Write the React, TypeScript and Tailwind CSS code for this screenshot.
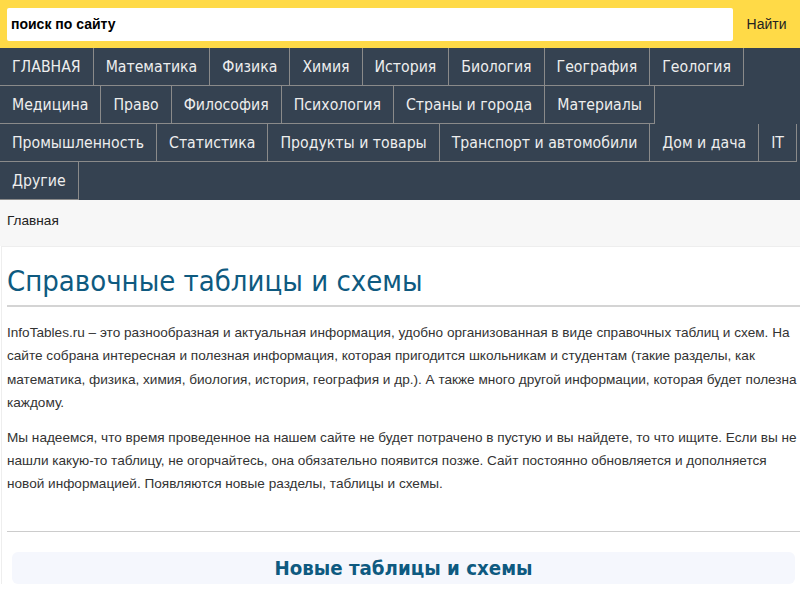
import React from 'react';

const rows = [
  'ГЛАВНАЯ', 'Математика', 'Физика', 'Химия', 'История', 'Биология', 'География', 'Геология',
  'Медицина', 'Право', 'Философия', 'Психология', 'Страны и города', 'Материалы',
  'Промышленность', 'Статистика', 'Продукты и товары', 'Транспорт и автомобили', 'Дом и дача', 'IT',
  'Другие',
];

export default function App() {
  return (
    <div className="w-[800px] min-h-[600px] bg-white font-['Liberation_Sans',Arial,sans-serif] text-[#333]">
      {/* search */}
      <div className="h-12 bg-[#ffda47] flex items-center pl-[7px]">
        <div className="w-[726px] h-[33px] bg-white rounded-[2px] flex items-center pl-1 text-[14px] font-bold text-black">
          поиск по сайту
        </div>
        <div className="flex-1 text-center text-[14px] text-[#222]">Найти</div>
      </div>

      {/* categories */}
      <nav className="bg-[#354251] flex flex-wrap font-['DejaVu_Sans_Condensed','DejaVu_Sans',sans-serif] text-[15.7px] text-[#eee]">
        {rows.map((r) => (
          <a key={r} className="h-[38px] px-3 pt-px flex items-center border-r border-b border-[#8a8a8a]">
            {r}
          </a>
        ))}
      </nav>

      {/* breadcrumb */}
      <div className="h-[46px] bg-[#f7f7f7] pt-[11px] pl-[7px] text-[13.6px] text-[#222]">Главная</div>

      <div className="ml-[1px] border-l border-t border-[#eee] pl-[5px] pt-[17px]">
        <h1 className="font-['DejaVu_Sans_Condensed','DejaVu_Sans',sans-serif] text-[29px] leading-[34px] text-[#0e5a80] border-b-2 border-[#d4d4d4] pb-[7px]">
          Справочные таблицы и схемы
        </h1>
        <div className="text-[13.6px] leading-[23.4px] pt-[14px]">
          <p className="mb-[11px]">
            InfoTables.ru – это разнообразная и актуальная информация, удобно организованная в виде справочных таблиц и схем. На сайте собрана интересная и полезная информация, которая пригодится школьникам и студентам (такие разделы, как математика, физика, химия, биология, история, география и др.). А также много другой информации, которая будет полезна каждому.
          </p>
          <p>
            Мы надеемся, что время проведенное на нашем сайте не будет потрачено в пустую и вы найдете, то что ищите. Если вы не нашли какую-то таблицу, не огорчайтесь, она обязательно появится позже. Сайт постоянно обновляется и дополняется новой информацией. Появляются новые разделы, таблицы и схемы.
          </p>
        </div>
        <div className="mt-[35px] border-t border-[#ccc]" />
        <div className="mt-[20px] mx-[5px] h-[32px] rounded-md bg-[#f5f7fd] flex items-center justify-center">
          <h2 className="font-['DejaVu_Sans_Condensed','DejaVu_Sans',sans-serif] font-bold text-[20.3px] text-[#0e5a80]">Новые таблицы и схемы</h2>
        </div>
      </div>
    </div>
  );
}
